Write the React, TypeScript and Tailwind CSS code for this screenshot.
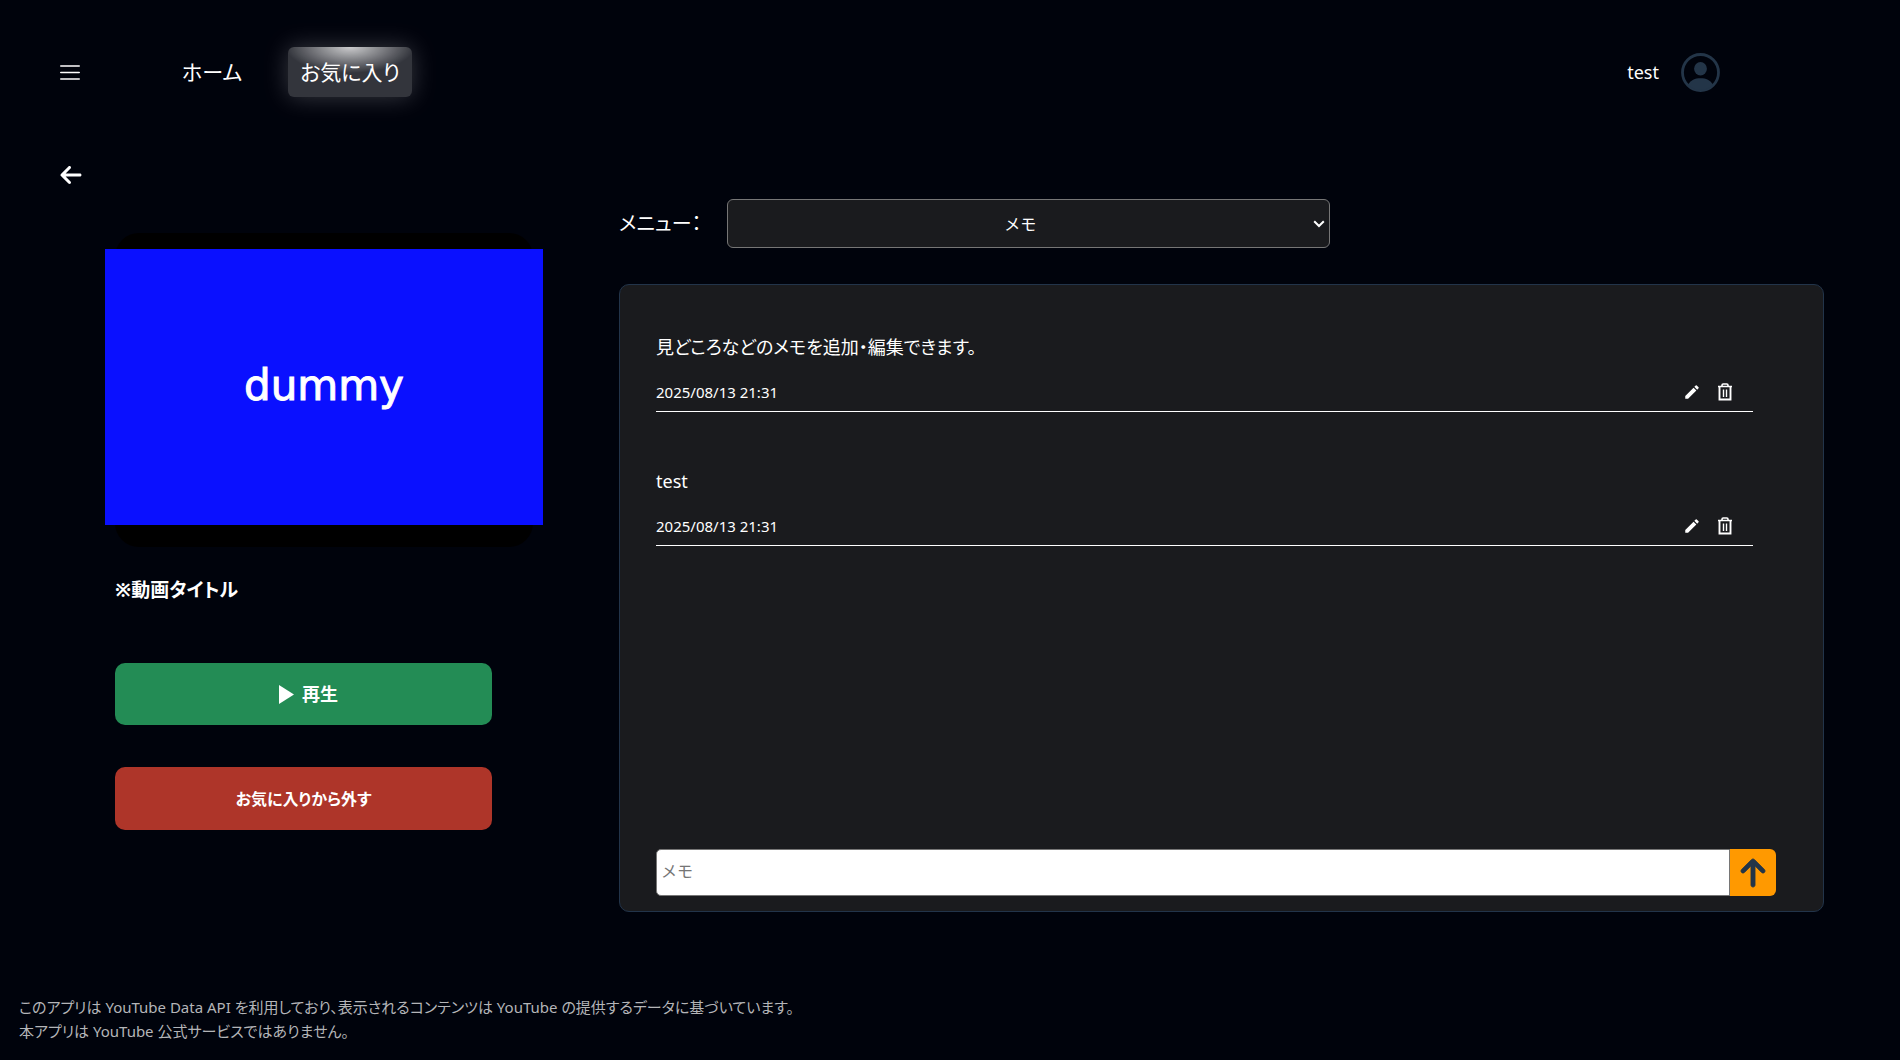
import React from "react";
import { FaArrowLeft, FaArrowUp } from "react-icons/fa6";
import { MdEdit } from "react-icons/md";

const memos = [
  { id: 1, body: "見どころなどのメモを追加・編集できます。", date: "2025/08/13 21:31" },
  { id: 2, body: "test", date: "2025/08/13 21:31" },
];

function MenuIcon() {
  return (
    <svg viewBox="0 0 20 15" className="h-[15px] w-5" stroke="currentColor" strokeWidth="1.6" strokeLinecap="round">
      <path d="M.8 1h18.4M.8 7.5h18.4M.8 14h18.4" />
    </svg>
  );
}

function AvatarIcon() {
  return (
    <svg viewBox="0 0 39 39" className="size-[39px]">
      <circle cx="19.5" cy="19.5" r="18" fill="none" stroke="currentColor" strokeWidth="2.8" />
      <ellipse cx="19.5" cy="15.8" rx="6.4" ry="6.8" fill="currentColor" />
      <path d="M7 32C9.5 27 14 25.3 19.5 25.3S29.5 27 32 32A18 18 0 0 1 7 32Z" fill="currentColor" />
    </svg>
  );
}

function TrashIcon() {
  return (
    <svg viewBox="0 0 16 18" className="h-[18px] w-4" fill="none" stroke="currentColor">
      <path d="M1 3.5h14M5 3V2.2Q5 1 6.2 1h3.6Q11 1 11 2.2V3" strokeWidth="1.6" />
      <path d="M2.5 4v12.5h11V4" strokeWidth="1.9" />
      <path d="M6.5 6.5v7.5M9.5 6.5v7.5" strokeWidth="1.4" />
    </svg>
  );
}

export default function App() {
  return (
    <div className="flex min-h-screen flex-col bg-[#00030c] font-['Noto_Sans','Noto_Sans_CJK_JP',sans-serif] text-white [font-feature-settings:'palt']">
      <header className="mt-[47px] flex h-[50px] items-center pr-[180px] pl-[60px]">
        <button type="button" aria-label="メニューを開く" className="mr-[90px]">
          <MenuIcon />
        </button>
        <nav className="flex items-center gap-[34px]">
          <a href="#home" className="px-3 text-[21px] leading-[50px]">ホーム</a>
          <a
            href="#favorites"
            className="rounded-md bg-white/20 bg-[radial-gradient(64px_26px_at_top,rgba(255,255,255,0.75),transparent)] px-3 text-[21px] leading-[50px] shadow-[0_0_24px_rgba(255,255,255,0.22)]"
          >
            お気に入り
          </a>
        </nav>
        <div className="ml-auto flex items-center gap-[22px]">
          <span className="text-lg">test</span>
          <button type="button" aria-label="アカウント" className="text-[#233548]">
            <AvatarIcon />
          </button>
        </div>
      </header>

      <main className="mt-[66px] flex flex-1 gap-[76px] pr-[76px] pl-[59px]">
        <section className="w-[484px] shrink-0">
          <a href="#back" aria-label="戻る" className="block w-6">
            <FaArrowLeft className="size-6" />
          </a>
          <div className="mt-[46px] ml-[46px] w-[438px]">
            <div className="mx-[10px] flex h-[314px] justify-center rounded-3xl bg-black pt-4">
              <div className="flex h-[276px] w-[438px] shrink-0 items-center justify-center bg-[#0a10ff] pb-1 font-['DejaVu_Sans',sans-serif] text-[42px] text-white [-webkit-text-stroke:1px_white]">
                dummy
              </div>
            </div>
          </div>
          <div className="ml-14 w-[377px]">
            <h1 className="mt-7 text-[19px] leading-[30px] font-bold">※動画タイトル</h1>
            <button type="button" className="mt-[58px] flex h-[62px] w-full items-center justify-center gap-2 rounded-[10px] bg-[#238c55] pl-[10px] text-lg font-bold">
              <svg viewBox="0 0 15 19" className="h-[19px] w-[15px]" fill="currentColor">
                <path d="M0 0L15 9.5L0 19Z" />
              </svg>
              再生
            </button>
            <button type="button" className="mt-[42px] h-[63px] w-full rounded-[10px] bg-[#ae3529] text-base font-bold">
              お気に入りから外す
            </button>
          </div>
        </section>

        <section className="mt-9 min-w-0 flex-1">
          <div className="flex items-center">
            <label htmlFor="menu" className="w-[108px] shrink-0 text-xl">メニュー：</label>
            <div className="relative w-1/2">
              <select
                id="menu"
                className="block h-[49px] w-full appearance-none rounded-md border border-[#767676] bg-[#1a1b1e] pr-4 text-center text-base [font-feature-settings:normal]"
              >
                <option>メモ</option>
              </select>
              <svg viewBox="0 0 12 8" className="pointer-events-none absolute top-[21px] right-[5px] h-2 w-3" fill="none" stroke="currentColor" strokeWidth="2">
                <path d="M1.2 1.2L6 6L10.8 1.2" />
              </svg>
            </div>
          </div>

          <div className="mt-9 flex h-[628px] flex-col rounded-[10px] border border-[#22344a] bg-[#1a1b1e] pr-[47px] pb-[15px] pl-9">
            <ul className="mt-[47px] mr-[23px] flex-1">
              {memos.map((memo) => (
                <li key={memo.id} className="mb-[54px] border-b border-white">
                  <p className="text-lg leading-[30px]">{memo.body}</p>
                  <div className="mt-[15px] flex h-[34px] items-center pb-1">
                    <time className="text-[15px] leading-6">{memo.date}</time>
                    <button type="button" aria-label="編集" className="mr-4 ml-auto">
                      <MdEdit className="size-[18px]" />
                    </button>
                    <button type="button" aria-label="削除" className="mr-5">
                      <TrashIcon />
                    </button>
                  </div>
                </li>
              ))}
            </ul>
            <form className="flex h-[47px]">
              <input
                type="text"
                aria-label="メモ"
                placeholder="メモ"
                className="min-w-0 flex-1 rounded-l-[5px] border border-[#767676] bg-white px-1 pb-1 text-base text-black [font-feature-settings:normal] placeholder:text-[#757575]"
              />
              <button type="button" aria-label="追加" className="flex w-[46px] items-center justify-center rounded-r-md bg-[#ff9900] text-[#233548]">
                <FaArrowUp className="size-8" stroke="currentColor" strokeWidth="14" />
              </button>
            </form>
          </div>
        </section>
      </main>

      <footer className="mb-[17px] px-[19px] text-[15px] leading-6 text-[#b4b5b8]">
        <p>このアプリは YouTube Data API を利用しており、表示されるコンテンツは YouTube の提供するデータに基づいています。</p>
        <p>本アプリは YouTube 公式サービスではありません。</p>
      </footer>
    </div>
  );
}
